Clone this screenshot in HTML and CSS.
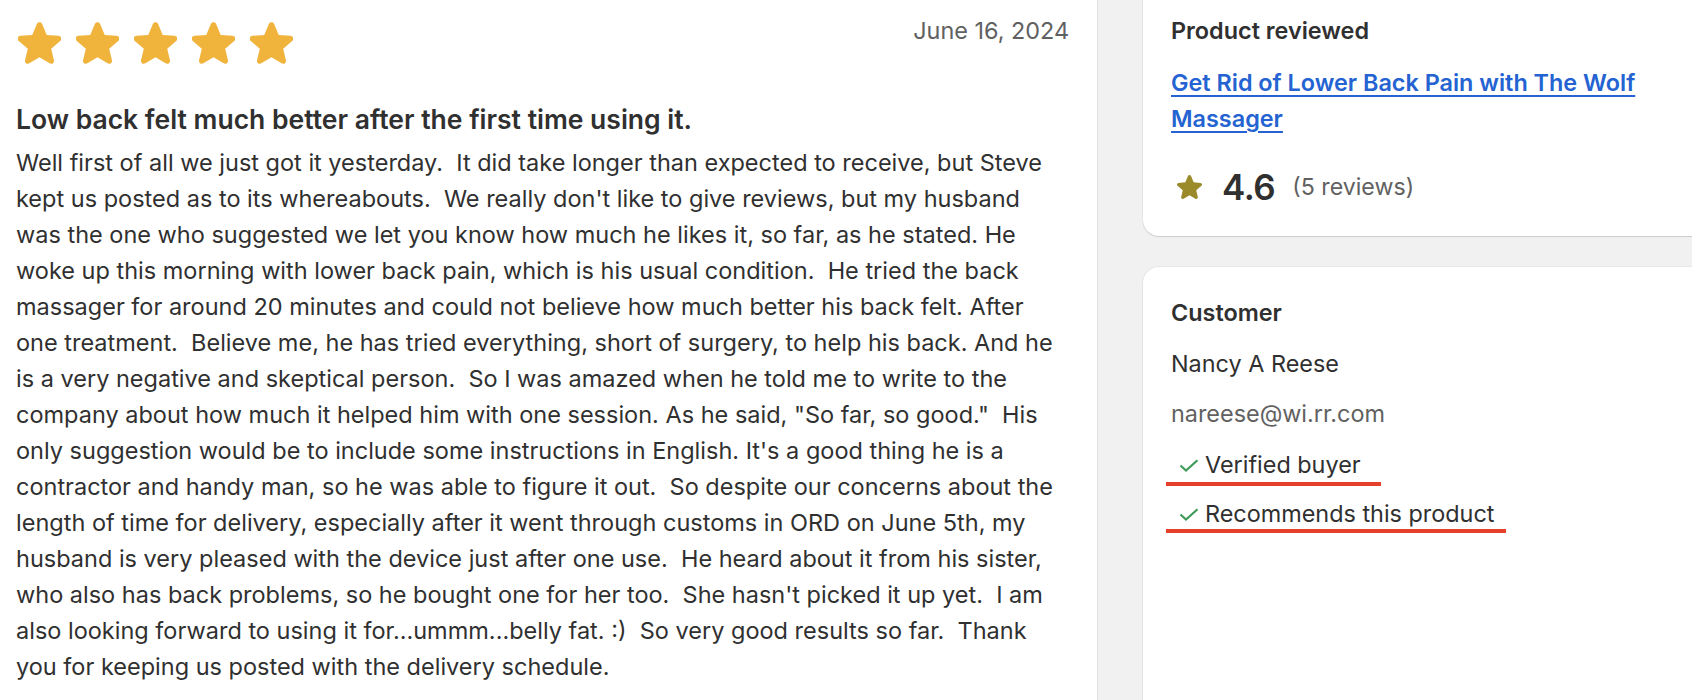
FILE: index.html
```html
<!DOCTYPE html>
<html lang="en">
<head>
    <meta charset="UTF-8">
    <title>Review</title>
    <link rel="stylesheet" href="styles.css">
</head>
<body>

<div class="page">

    <!-- Review -->
    <main class="review-panel">
        <div class="review-head">
            <div class="stars">
                <svg class="star" viewBox="2.2 2.4 19.6 19"><path d="M10.788 3.21c.448-1.077 1.976-1.077 2.424 0l2.082 5.006 5.404.434c1.164.093 1.636 1.545.749 2.305l-4.117 3.527 1.257 5.273c.271 1.136-.964 2.033-1.96 1.425L12 18.354 7.373 21.18c-.996.608-2.231-.29-1.96-1.425l1.257-5.273-4.117-3.527c-.887-.76-.415-2.212.749-2.305l5.404-.434 2.082-5.005Z"/></svg>
                <svg class="star" viewBox="2.2 2.4 19.6 19"><path d="M10.788 3.21c.448-1.077 1.976-1.077 2.424 0l2.082 5.006 5.404.434c1.164.093 1.636 1.545.749 2.305l-4.117 3.527 1.257 5.273c.271 1.136-.964 2.033-1.96 1.425L12 18.354 7.373 21.18c-.996.608-2.231-.29-1.96-1.425l1.257-5.273-4.117-3.527c-.887-.76-.415-2.212.749-2.305l5.404-.434 2.082-5.005Z"/></svg>
                <svg class="star" viewBox="2.2 2.4 19.6 19"><path d="M10.788 3.21c.448-1.077 1.976-1.077 2.424 0l2.082 5.006 5.404.434c1.164.093 1.636 1.545.749 2.305l-4.117 3.527 1.257 5.273c.271 1.136-.964 2.033-1.96 1.425L12 18.354 7.373 21.18c-.996.608-2.231-.29-1.96-1.425l1.257-5.273-4.117-3.527c-.887-.76-.415-2.212.749-2.305l5.404-.434 2.082-5.005Z"/></svg>
                <svg class="star" viewBox="2.2 2.4 19.6 19"><path d="M10.788 3.21c.448-1.077 1.976-1.077 2.424 0l2.082 5.006 5.404.434c1.164.093 1.636 1.545.749 2.305l-4.117 3.527 1.257 5.273c.271 1.136-.964 2.033-1.96 1.425L12 18.354 7.373 21.18c-.996.608-2.231-.29-1.96-1.425l1.257-5.273-4.117-3.527c-.887-.76-.415-2.212.749-2.305l5.404-.434 2.082-5.005Z"/></svg>
                <svg class="star" viewBox="2.2 2.4 19.6 19"><path d="M10.788 3.21c.448-1.077 1.976-1.077 2.424 0l2.082 5.006 5.404.434c1.164.093 1.636 1.545.749 2.305l-4.117 3.527 1.257 5.273c.271 1.136-.964 2.033-1.96 1.425L12 18.354 7.373 21.18c-.996.608-2.231-.29-1.96-1.425l1.257-5.273-4.117-3.527c-.887-.76-.415-2.212.749-2.305l5.404-.434 2.082-5.005Z"/></svg>
            </div>
            <span class="review-date">June 16, 2024</span>
        </div>

        <h3 class="review-title">Low back felt much better after the first time using it.</h3>
        <p class="review-body">Well first of all we just got it yesterday.&nbsp; It did take longer than expected to receive, but Steve<br>kept us posted as to its whereabouts.&nbsp; We really don't like to give reviews, but my husband<br>was the one who suggested we let you know how much he likes it, so far, as he stated. He<br>woke up this morning with lower back pain, which is his usual condition.&nbsp; He tried the back<br>massager for around 20 minutes and could not believe how much better his back felt. After<br>one treatment.&nbsp; Believe me, he has tried everything, short of surgery, to help his back. And he<br>is a very negative and skeptical person.&nbsp; So I was amazed when he told me to write to the<br>company about how much it helped him with one session. As he said, "So far, so good."&nbsp; His<br>only suggestion would be to include some instructions in English. It's a good thing he is a<br>contractor and handy man, so he was able to figure it out.&nbsp; So despite our concerns about the<br>length of time for delivery, especially after it went through customs in ORD on June 5th, my<br>husband is very pleased with the device just after one use.&nbsp; He heard about it from his sister,<br>who also has back problems, so he bought one for her too.&nbsp; She hasn't picked it up yet.&nbsp; I am<br>also looking forward to using it for...ummm...belly fat. :)&nbsp; So very good results so far.&nbsp; Thank<br>you for keeping us posted with the delivery schedule.</p>
    </main>

    <!-- Side cards -->
    <aside class="sidebar">
        <section class="card card-product">
            <h4 class="card-title">Product reviewed</h4>
            <a class="product-link" href="#">Get Rid of Lower Back Pain with The Wolf Massager</a>
            <div class="rating">
                <svg class="rating-star" viewBox="2.2 2.4 19.6 19"><path d="M10.788 3.21c.448-1.077 1.976-1.077 2.424 0l2.082 5.006 5.404.434c1.164.093 1.636 1.545.749 2.305l-4.117 3.527 1.257 5.273c.271 1.136-.964 2.033-1.96 1.425L12 18.354 7.373 21.18c-.996.608-2.231-.29-1.96-1.425l1.257-5.273-4.117-3.527c-.887-.76-.415-2.212.749-2.305l5.404-.434 2.082-5.005Z"/></svg>
                <span class="rating-value">4.6</span>
                <span class="rating-count">(5 reviews)</span>
            </div>
        </section>

        <section class="card card-customer">
            <h4 class="card-title">Customer</h4>
            <div class="customer-name">Nancy A Reese</div>
            <div class="customer-email">nareese@wi.rr.com</div>
            <div class="badge badge-first">
                <svg class="check" viewBox="0 0 20 13"><polyline points="1.5,6.5 7,11.5 18.5,1.2"/></svg>
                <span>Verified buyer</span>
            </div>
            <div class="badge badge-second">
                <svg class="check" viewBox="0 0 20 13"><polyline points="1.5,6.5 7,11.5 18.5,1.2"/></svg>
                <span>Recommends this product</span>
            </div>
        </section>
    </aside>

</div>

</body>
</html>
```

FILE: styles.css
```css
body {
    margin: 0;
    background-color: #f1f1f1;
    font-family: Inter, "Noto Sans", sans-serif;
    color: #303030;
}

.page {
    display: flex;
    height: 700px;
    overflow: hidden;
}

/* Review panel */
.review-panel {
    flex: 0 0 1098px;
    box-sizing: border-box;
    padding: 17px 28px 0 16px;
    background-color: white;
    border-right: 1px solid #e1e1e1;
}

.review-head {
    display: flex;
    justify-content: space-between;
    align-items: flex-start;
}

.stars {
    display: flex;
    gap: 15px;
    margin-top: 5px;
    padding-left: 2px;
}

.star {
    width: 43px;
    height: 42px;
    fill: #f0b43c;
}

.review-date {
    font-size: 23.4px;
    line-height: 28px;
    color: #616161;
}

.review-title {
    margin: 41px 0 0;
    font-size: 26.5px;
    line-height: 28px;
    font-weight: 600;
}

.review-body {
    margin: 12px 0 0;
    font-size: 23.5px;
    line-height: 36px;
    white-space: nowrap;
}

/* Sidebar */
.sidebar {
    flex: 0 0 auto;
    padding-left: 45px;
    margin-top: -20px;
}

.card {
    width: 620px;
    box-sizing: border-box;
    background-color: white;
    border-radius: 16px;
    box-shadow: 0 1px 1px rgba(0, 0, 0, 0.12), 0 0 0 1px rgba(0, 0, 0, 0.04);
    padding: 0 28px;
}

.card-product {
    padding-top: 37px;
    padding-bottom: 29px;
}

.card-customer {
    margin-top: 31px;
    padding-top: 32px;
    min-height: 500px;
}

.card-title {
    margin: 0;
    font-size: 23.4px;
    line-height: 28px;
    font-weight: 600;
}

.product-link {
    display: block;
    max-width: 510px;
    margin-top: 20px;
    font-size: 23.4px;
    line-height: 36px;
    font-weight: 600;
    color: #2463d1;
    text-decoration: underline;
    text-underline-offset: 4px;
}

.rating {
    display: flex;
    align-items: center;
    height: 40px;
    margin-top: 30px;
}

.rating-star {
    width: 25px;
    height: 24px;
    margin-left: 6px;
    fill: #9a8a2a;
}

.rating-value {
    margin-left: 20px;
    font-size: 35px;
    font-weight: 600;
    letter-spacing: -0.5px;
}

.rating-count {
    margin-left: 17px;
    font-size: 23.2px;
    color: #616161;
}

.customer-name {
    margin-top: 23px;
    font-size: 23.4px;
    line-height: 28px;
}

.customer-email {
    margin-top: 22px;
    font-size: 23.4px;
    line-height: 28px;
    color: #616161;
}

/* Marked badges */
.badge {
    display: flex;
    align-items: center;
    gap: 6px;
    width: fit-content;
    margin-left: -5px;
    padding-left: 13px;
    font-size: 23.4px;
    line-height: 28px;
    border-bottom: 4px solid #e5412a;
}

.badge-first {
    margin-top: 23px;
    padding-right: 20px;
    padding-bottom: 3px;
}

.badge-second {
    margin-top: 14px;
    padding-right: 12px;
    padding-bottom: 1px;
}

.check {
    width: 20px;
    height: 13px;
    fill: none;
    stroke: #3f9b5a;
    stroke-width: 2.2;
}
```
